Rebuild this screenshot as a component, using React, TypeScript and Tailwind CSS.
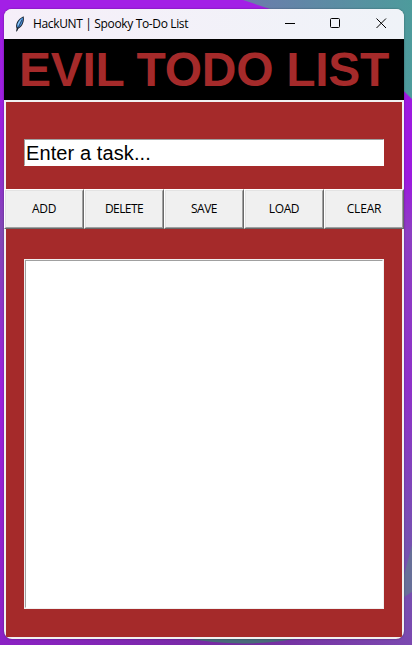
import { useState } from 'react';

const ACTIONS = [
  { label: 'ADD', tracking: 'tracking-[-0.3px]' },
  { label: 'DELETE', tracking: 'tracking-[-0.6px]' },
  { label: 'SAVE', tracking: 'tracking-[-0.5px]' },
  { label: 'LOAD', tracking: 'tracking-[-0.4px]' },
  { label: 'CLEAR', tracking: 'tracking-[-0.15px]' },
];

function Wallpaper() {
  return (
    <svg className="absolute inset-0 h-full w-full" viewBox="0 0 412 645" preserveAspectRatio="none">
      <defs>
        <linearGradient id="left" x1="0" y1="0" x2="0" y2="1">
          <stop offset="0" stopColor="#a31fe6" />
          <stop offset="0.22" stopColor="#9a20dc" />
          <stop offset="0.36" stopColor="#8149b4" />
          <stop offset="0.6" stopColor="#9c20dc" />
          <stop offset="1" stopColor="#8b21c4" />
        </linearGradient>
        <linearGradient id="right" x1="0" y1="0" x2="0" y2="1">
          <stop offset="0" stopColor="#a01ae2" />
          <stop offset="0.28" stopColor="#9c1adf" />
          <stop offset="0.36" stopColor="#8d3fc2" />
          <stop offset="0.6" stopColor="#8f31c9" />
          <stop offset="0.85" stopColor="#7653b0" />
          <stop offset="1" stopColor="#7b49b0" />
        </linearGradient>
        <linearGradient id="teal" x1="0" y1="0" x2="1" y2="0">
          <stop offset="0" stopColor="#6c7bac" />
          <stop offset="1" stopColor="#4d9b9c" />
        </linearGradient>
        <linearGradient id="bottom" x1="0" y1="0" x2="1" y2="0">
          <stop offset="0" stopColor="#8b21c4" />
          <stop offset="0.6" stopColor="#742c9f" />
          <stop offset="1" stopColor="#7b49b0" />
        </linearGradient>
      </defs>
      <rect width="206" height="645" fill="url(#left)" />
      <rect x="206" width="206" height="645" fill="url(#right)" />
      <rect y="637" width="412" height="8" fill="url(#bottom)" />
      <rect width="300" height="12" fill="#a31fe6" />
      <path d="M243 0 L270 9 Q350 35 412 99 V0Z" fill="url(#teal)" />
      <path d="M180 637 Q245 650 305 637Z" fill="#486b7a" />
      <path d="M404 575 L412 545 V592 L404 597Z" fill="#687099" />
    </svg>
  );
}

function FeatherIcon() {
  return (
    <svg className="h-4 w-4" viewBox="0 0 16 16">
      <path d="M4.2 15.5 L4.6 12.5 C3 8.5 5.6 3 11.6 0.3 C12.7 4.5 11 10.5 6.2 12.8 L4.9 15.5Z" fill="#1b2430" />
      <path d="M5.2 11 C4.6 7.5 7.2 3.6 10.9 1.6 C11.2 5.5 9.6 10 6.4 11.7Z" fill="#4a92e0" />
      <path d="M5.6 9.5 C5.6 6.8 7.4 4.3 9.6 3 L6.6 9.5Z" fill="#8fc5f5" />
      <path d="M10 3.8 L4.7 14.8" stroke="#1b2430" strokeWidth="0.7" />
    </svg>
  );
}

function TitleBar() {
  return (
    <header className="flex h-[30px] items-center bg-gradient-to-r from-[#f6eff9] to-[#eff3f8] pl-2">
      <FeatherIcon />
      <h1 className="ml-[5px] flex-1 whitespace-nowrap font-['Open_Sans','Noto_Sans',sans-serif] text-[12px] tracking-[-0.35px] text-black">
        HackUNT | Spooky To-Do List
      </h1>
      <div className="flex">
        <button className="flex h-[30px] w-[45px] items-center justify-center pb-px" aria-label="Minimize">
          <svg width="11" height="11" viewBox="0 0 11 11">
            <path d="M0 5.5H10" stroke="#000" />
          </svg>
        </button>
        <button className="flex h-[30px] w-[45px] items-center justify-center pb-px" aria-label="Maximize">
          <svg width="11" height="11" viewBox="0 0 11 11">
            <rect x="0.5" y="0.5" width="9" height="9" rx="1" fill="none" stroke="#000" />
          </svg>
        </button>
        <button className="flex h-[30px] w-[46px] items-center justify-center pb-px" aria-label="Close">
          <svg width="11" height="11" viewBox="0 0 11 11">
            <path d="M0.5 0.5L10 10M10 0.5L0.5 10" stroke="#000" />
          </svg>
        </button>
      </div>
    </header>
  );
}

export default function App() {
  const [task, setTask] = useState('Enter a task...');

  return (
    <div className="relative h-[645px] w-[412px] overflow-hidden px-1 pt-[9px]">
      <Wallpaper />
      <main className="relative flex h-[630px] w-[400px] flex-col overflow-hidden rounded-lg bg-[#f0f0f0] shadow-[0_0_2px_rgba(0,0,0,0.4)]">
        <TitleBar />
        <div className="flex h-[61px] items-center justify-center whitespace-nowrap bg-black font-['Liberation_Sans',Arial,sans-serif] text-[48px] leading-[61px] font-bold tracking-[-0.3px] text-[#a52a2a]">
          EVIL TODO LIST
        </div>

        <section className="mx-0.5 mt-0.5 h-[87px] bg-[#a52a2a] px-[18px] pt-[37px]">
          <input
            type="text"
            value={task}
            onChange={(e) => setTask(e.target.value)}
            className="block h-[27px] w-[360px] border border-t-[#a0a0a0] border-r-white border-b-white border-l-[#a0a0a0] bg-white pl-px font-['Liberation_Sans',Arial,sans-serif] text-[20px] tracking-[0.1px] text-black outline-none"
          />
        </section>

        <nav className="flex h-10">
          {ACTIONS.map(({ label, tracking }) => (
            <button
              key={label}
              className="h-10 w-20 border border-t-white border-r-[#696969] border-b-[#696969] border-l-white"
            >
              <span
                className={`flex h-full items-center justify-center border border-t-[#e3e3e3] border-r-[#a0a0a0] border-b-[#a0a0a0] border-l-[#e3e3e3] bg-[#f0f0f0] font-['Open_Sans','Noto_Sans',sans-serif] text-[12px] text-black ${tracking}`}
              >
                {label}
              </span>
            </button>
          ))}
        </nav>

        <section className="mx-0.5 mb-0.5 flex-1 bg-[#a52a2a] px-[18px] pt-[30px]">
          <div className="h-[350px] border border-[#f0f0f0]">
            <ul className="h-full border border-t-[#a0a0a0] border-r-white border-b-white border-l-[#a0a0a0] bg-white" />
          </div>
        </section>
      </main>
    </div>
  );
}
